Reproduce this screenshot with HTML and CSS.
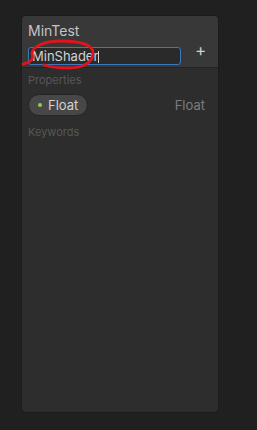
FILE: index.html
```html
<!DOCTYPE html>
<html lang="en">
<head>
  <meta charset="UTF-8" />
  <title>Blackboard</title>
  <link rel="stylesheet" href="styles.css">
</head>
<body>
  <section class="board">
    <header class="board-head">
      <div class="board-title">MinTest</div>
      <div class="head-row">
        <div class="name-field">MinShader<span class="caret"></span></div>
        <button class="add-btn">+</button>
      </div>
    </header>
    <div class="section-label">Properties</div>
    <div class="prop-row">
      <span class="pill"><span class="dot"></span>Float</span>
      <span class="prop-type">Float</span>
    </div>
    <div class="section-label">Keywords</div>
  </section>
  <!-- hand drawn mark over the name field -->
  <svg class="scribble" width="80" height="34" viewBox="20 37 80 34">
    <path d="M23 64 C 30 62, 34 60, 32 54 C 32 46, 45 41, 60 41 C 78 41, 93 44, 93 53 C 93 62, 84 68, 68 68 C 58 68, 50 67, 44 65" fill="none" stroke="#e0141c" stroke-width="2.8" stroke-linecap="round"/>
  </svg>
</body>
</html>
```

FILE: styles.css
```css
:root {
  --bg: #202020;
  --panel: #2d2d2d;
  --panel-head: #383838;
  --text: #c8c8c8;
  --muted: #575757;
  --accent: #3a79bb;
}
html, body {
  margin: 0;
  padding: 0;
  background: var(--bg);
  font-family: Inter, "Noto Sans", sans-serif;
  color: var(--text);
}
.board {
  margin: 15px 0 0 21px;
  width: 198px;
  height: 398px;
  box-sizing: border-box;
  background: var(--panel);
  border: 1px solid #1b1b1b;
  border-radius: 5px;
  overflow: hidden;
}
.board-head {
  background: var(--panel-head);
  border-bottom: 1px solid #232323;
  padding: 5px 0 3px 6px;
  height: 52px;
  box-sizing: border-box;
}
.board-title {
  font-size: 14px;
  line-height: 19px;
  color: #c4c4c4;
}
.head-row {
  display: flex;
  align-items: center;
  margin-top: 7px;
}
.name-field {
  width: 153px;
  height: 18px;
  box-sizing: border-box;
  border: 1px solid var(--accent);
  border-radius: 3px;
  background: #2a2a2a;
  font-size: 13px;
  line-height: 16px;
  padding-left: 3px;
  color: #d4d4d4;
}
.caret {
  display: inline-block;
  width: 1px;
  height: 12px;
  background: #d4d4d4;
  vertical-align: -2px;
}
.add-btn {
  background: none;
  border: none;
  color: #cfcfcf;
  font-family: inherit;
  font-size: 17px;
  line-height: 16px;
  padding: 0;
  margin: -13px 0 0 14px;
  cursor: pointer;
}
.scribble {
  position: absolute;
  left: 20px;
  top: 37px;
}
.section-label {
  font-size: 11px;
  line-height: 14px;
  color: var(--muted);
  padding: 5px 0 0 6px;
}
.prop-row {
  display: flex;
  align-items: center;
  justify-content: space-between;
  padding: 7px 13px 4px 6px;
}
.pill {
  display: inline-flex;
  align-items: center;
  height: 22px;
  padding: 0 9px 0 9px;
  box-sizing: border-box;
  border-radius: 11px;
  background: #474747;
  border: 1px solid #252525;
  font-size: 13px;
  color: #d2d2d2;
}
.dot {
  width: 4px;
  height: 4px;
  border-radius: 50%;
  background: #8ed04c;
  margin-right: 6px;
}
.prop-type {
  font-size: 13px;
  color: #7c7c7c;
}
```
